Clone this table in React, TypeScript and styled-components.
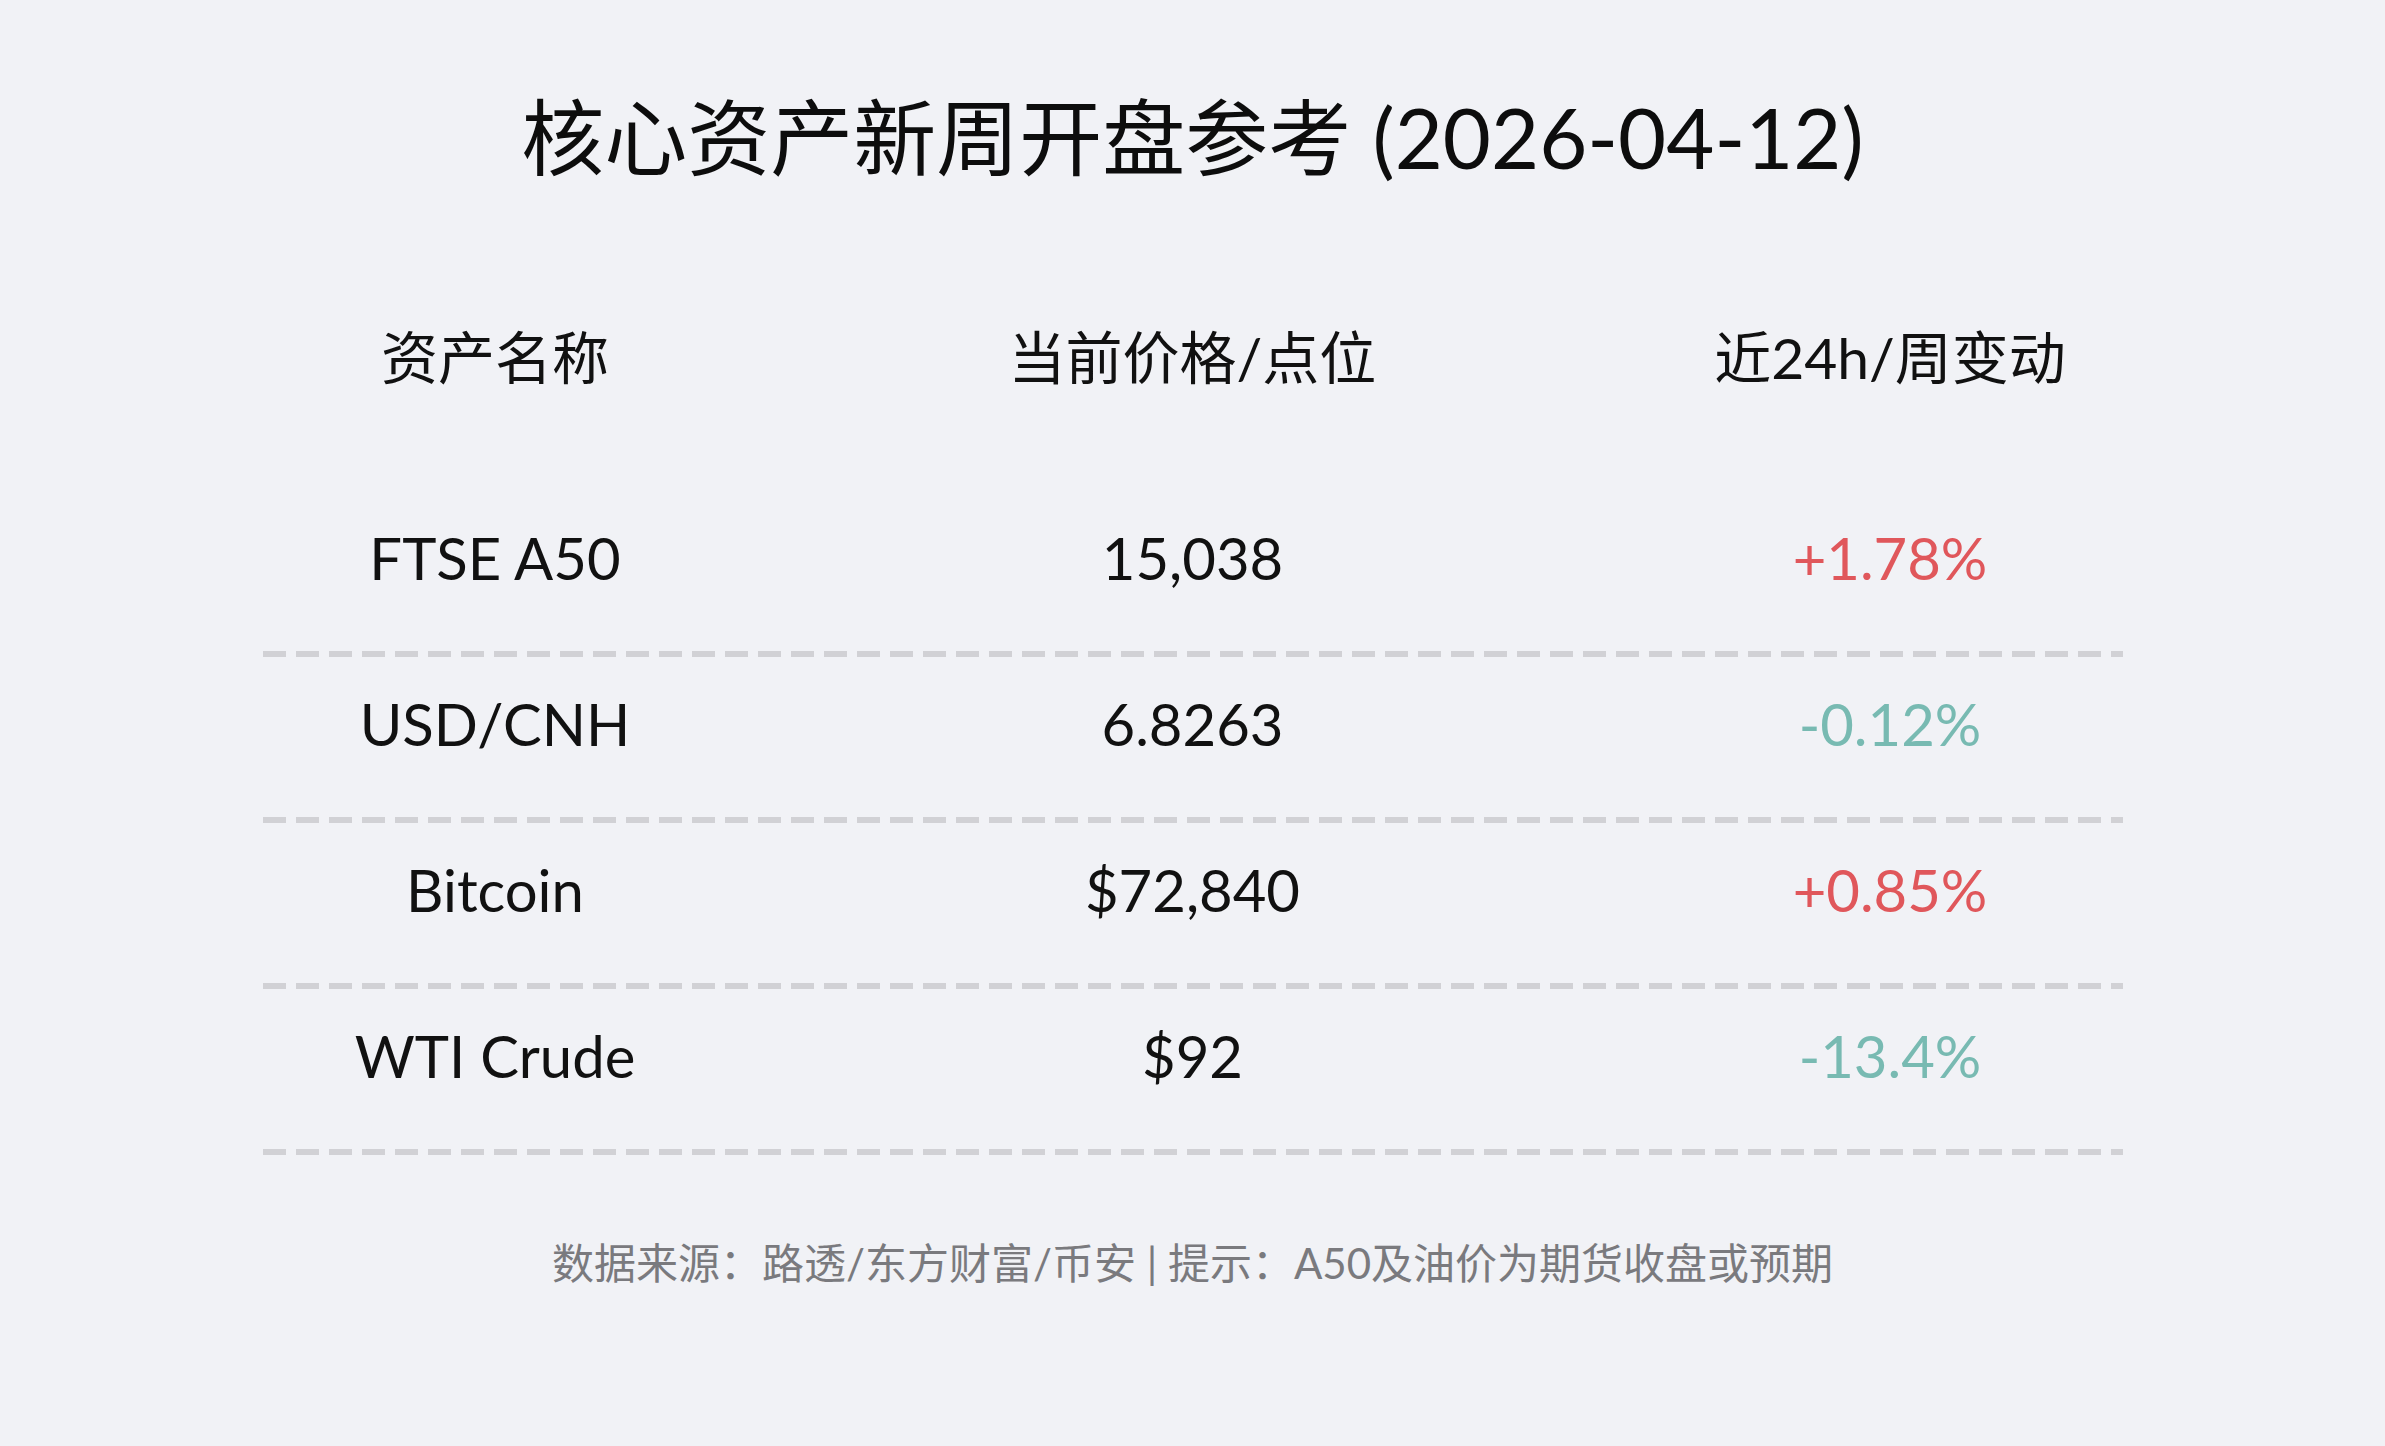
import React from 'react';
import styled, { createGlobalStyle } from 'styled-components';

const FONT = `Lato, "Noto Sans CJK SC", sans-serif`;

type Trend = 'up' | 'down';

const ROWS: { name: string; price: string; change: string; trend: Trend }[] = [
  { name: 'FTSE A50', price: '15,038', change: '+1.78%', trend: 'up' },
  { name: 'USD/CNH', price: '6.8263', change: '-0.12%', trend: 'down' },
  { name: 'Bitcoin', price: '$72,840', change: '+0.85%', trend: 'up' },
  { name: 'WTI Crude', price: '$92', change: '-13.4%', trend: 'down' },
];

const GlobalStyle = createGlobalStyle`
  html, body {
    margin: 0;
    padding: 0;
    background: #f1f2f6;
  }
  body {
    font-family: ${FONT};
    color: #111;
  }
`;

function App() {
  return (
    <Page>
      <GlobalStyle />
      <Title>核心资产新周开盘参考 (2026-04-12)</Title>
      <Table>
        <HeaderRow>
          <Cell>资产名称</Cell>
          <Cell>当前价格/点位</Cell>
          <Cell>近24h/周变动</Cell>
        </HeaderRow>
        {ROWS.map((row) => (
          <Row key={row.name}>
            <Cell>{row.name}</Cell>
            <Cell>{row.price}</Cell>
            <Change $trend={row.trend}>{row.change}</Change>
          </Row>
        ))}
      </Table>
      <Footer>数据来源：路透/东方财富/币安 | 提示：A50及油价为期货收盘或预期</Footer>
    </Page>
  );
}

const Page = styled.div`
  width: 2385px;
  min-height: 1446px;
  box-sizing: border-box;
  padding-top: 87px;
  display: flex;
  flex-direction: column;
  align-items: center;
`;

const Title = styled.h1`
  margin: 0;
  font-family: ${FONT};
  font-weight: 400;
  font-size: 83px;
  line-height: 100px;
  color: #0d0d0d;
  white-space: nowrap;
`;

const Table = styled.div`
  width: 1860px;
  margin-top: 110px;
  display: flex;
  flex-direction: column;
`;

const Grid = styled.div`
  display: grid;
  grid-template-columns: 1fr 2fr 1fr;
  align-items: center;
`;

const HeaderRow = styled(Grid)`
  height: 120px;
  margin-bottom: 74px;
  font-size: 57px;
`;

const Row = styled(Grid)`
  height: 134px;
  padding-bottom: 32px;
  font-size: 58px;
  background-image: repeating-linear-gradient(
    to right,
    #d1d1d5 0 23px,
    transparent 23px 33px
  );
  background-size: 100% 6px;
  background-position: 0 100%;
  background-repeat: no-repeat;
`;

const Cell = styled.div`
  text-align: center;
  white-space: nowrap;
  line-height: 1;
`;

const Change = styled(Cell)<{ $trend: Trend }>`
  color: ${({ $trend }) => ($trend === 'up' ? '#e0575b' : '#78bab2')};
`;

const Footer = styled.div`
  margin-top: 78px;
  font-size: 42px;
  line-height: 60px;
  color: #7a7a7e;
  white-space: nowrap;
`;

export default App;
